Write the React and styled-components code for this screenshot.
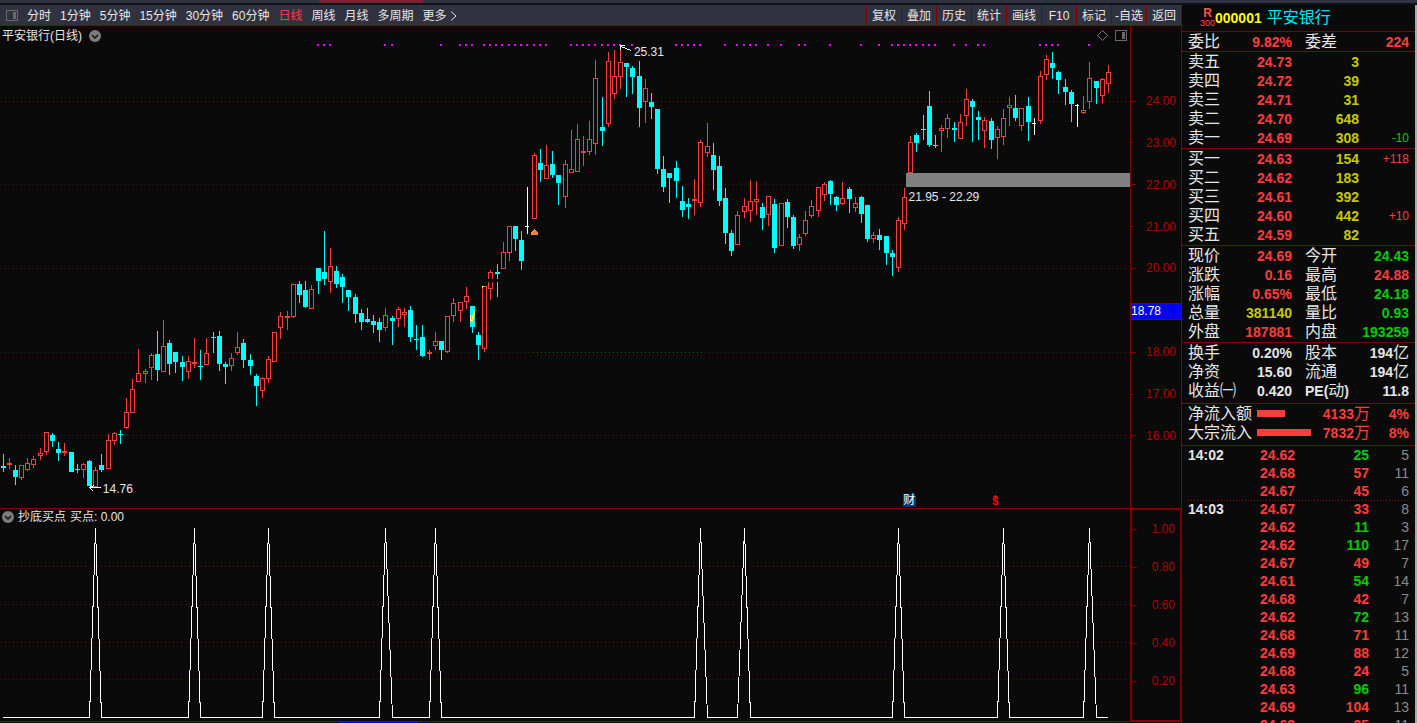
import React from "react";
import styled, { createGlobalStyle } from "styled-components";

const UP = "#ff3c3c";
const DOWN = "#00ffff";
const RULE = "#800000";
const BG = "#0a0a0a";
const GREEN = "#00cc00";
const YELLOW = "#c8c800";
const WHITE = "#e6e6e6";
const MUTED = "#8a8a8a";

const Global = createGlobalStyle`
  * { box-sizing: border-box; }
  body {
    margin: 0;
    background: ${BG};
    color: ${WHITE};
    font: 12px/16px "Liberation Sans", "Noto Sans CJK SC", sans-serif;
    overflow: hidden;
  }
`;

const Page = styled.div`
  display: flex;
  flex-direction: column;
  height: 100vh;
`;

const TitleStrip = styled.div`
  flex: none;
  display: flex;
  height: 5px;
  background: #303240;
  border-bottom: 2px solid #10141a;
`;
const StripGap = styled.div`
  flex: 319 1 0;
`;
const StripActive = styled.div`
  flex: 104 1 0;
  background: #7d2031;
`;
const StripRest = styled.div`
  flex: 994 1 0;
`;

const Body = styled.div`
  flex: 1;
  min-height: 0;
  display: flex;
`;

const Workspace = styled.main`
  flex: 1;
  min-width: 0;
  display: flex;
  flex-direction: column;
`;

const Toolbar = styled.nav`
  flex: none;
  display: flex;
  justify-content: space-between;
  height: 21px;
  background: #303240;
  border-bottom: 1px solid ${RULE};
`;

const Periods = styled.div`
  display: flex;
  align-items: center;
  gap: 9px;
  padding: 2px 0 0 6px;
  white-space: nowrap;
`;

const PlainButton = styled.button`
  display: flex;
  align-items: center;
  padding: 0;
  border: 0;
  background: none;
  color: ${(p) => (p.$active ? UP : WHITE)};
  font: inherit;
  white-space: nowrap;
  cursor: pointer;
`;

const Tools = styled.div`
  display: flex;
`;

const ToolButton = styled(PlainButton)`
  width: 35px;
  padding-top: 2px;
  justify-content: center;
  border-left: 1px solid ${RULE};
`;

const Charts = styled.div`
  flex: 1;
  min-height: 0;
  display: grid;
  grid-template-columns: minmax(0, 1fr) 51px;
  grid-template-rows: minmax(0, 483fr) minmax(0, 213fr);
`;

const Pane = styled.section`
  position: relative;
  min-width: 0;
  min-height: 0;
  border-bottom: 1px solid ${RULE};
`;

const Plot = styled.svg`
  display: block;
  width: 100%;
  height: 100%;
  shape-rendering: crispEdges;
`;

const PaneTitle = styled.h2`
  position: absolute;
  top: ${(p) => p.$top};
  left: 2px;
  display: flex;
  align-items: center;
  gap: 4px;
  margin: 0;
  font-size: 12px;
  font-weight: 400;
  line-height: 16px;
`;

const PaneTools = styled.div`
  position: absolute;
  top: 3px;
  right: 3px;
  display: flex;
  align-items: center;
  gap: 6px;
`;

const Note = styled.span`
  position: absolute;
  left: ${(p) => p.$x};
  top: ${(p) => p.$y};
  line-height: 14px;
  white-space: nowrap;
`;

const Badge = styled(Note)`
  width: 13px;
  height: 13px;
  line-height: 13px;
  text-align: center;
  color: #fff;
  background: #06386e;
  border-top-right-radius: 3px;
`;

const Dividend = styled(Note)`
  display: flex;
  flex-direction: column;
  align-items: center;
  color: #ff0000;
  font-size: 11px;
  font-weight: 700;
  line-height: 9px;
`;

const Axis = styled.div`
  position: relative;
  display: flex;
  flex-direction: column;
  min-height: 0;
  border: solid ${RULE};
  border-width: ${(p) => (p.$framed ? "2px" : "0 0 0 1px")};
  margin: ${(p) => (p.$framed ? "-1px -1px 0 0" : "0")};
  color: #b40000;
`;
const Ladder = styled.div`
  flex: ${(p) => p.$share} 1 0;
  min-height: 0;
  display: flex;
  flex-direction: column;
`;
const Space = styled.div`
  flex: ${(p) => p.$share} 1 0;
`;
const Step = styled.div`
  flex: 1 1 0;
  min-height: 0;
  display: flex;
  align-items: center;
  justify-content: space-between;
  padding-right: 5px;
`;
const Tick = styled.i`
  width: ${(p) => (p.$minor ? 2 : 5)}px;
  height: 1px;
  background: ${RULE};
`;
const PriceTag = styled.div`
  position: absolute;
  top: 57.4%;
  left: 0;
  right: 0;
  height: 17px;
  background: #0000ff;
  border: solid ${RULE};
  border-width: 1px 0;
  color: #fff;
  line-height: 15px;
`;

const DateStrip = styled.div`
  flex: none;
  display: flex;
  height: 1px;
`;
const DateMark = styled.div`
  flex: ${(p) => p.$share} 1 0;
  background: ${(p) => (p.$on ? "#0000ff" : BG)};
`;

const Quote = styled.aside`
  flex: none;
  width: 236px;
  overflow: hidden;
  border-left: 1px solid ${RULE};
  border-right: 2px solid #a8a8a8;
  font-size: 14px;
  font-weight: 700;
`;

const QuoteHeader = styled.header`
  display: flex;
  align-items: center;
  height: 27px;
  padding-left: 18px;
  border-bottom: 1px solid ${RULE};
`;
const Markers = styled.span`
  display: flex;
  flex-direction: column;
  align-items: center;
  width: 15px;
  color: #ff5050;
  font-size: 12px;
  line-height: 10px;
`;
const MarkerSmall = styled.span`
  font-size: 9px;
  font-weight: 400;
`;
const Code = styled.span`
  color: #ffff00;
`;
const Name = styled.span`
  margin-left: 5px;
  color: #00e5ff;
  font-size: 16px;
  font-weight: 400;
`;

const Block = styled.div`
  padding: 0 6px ${(p) => p.$pad || 0}px;
  border-bottom: ${(p) => (p.$last ? 0 : 1)}px solid ${RULE};
`;
const Grid = styled.table`
  width: 100%;
  table-layout: fixed;
  border-collapse: collapse;
  border-spacing: 0;
`;
const Row = styled.tr`
  height: ${(p) => p.$h || 19}px;
`;
const Label = styled.th`
  width: ${(p) => p.$w}px;
  padding: 0 0 0 ${(p) => p.$indent || 0}px;
  text-align: left;
  font-size: 16px;
  font-weight: 400;
  line-height: 18px;
  white-space: nowrap;
`;
const Latin = styled.b`
  font-size: 14px;
`;
const Value = styled.td`
  width: ${(p) => (p.$w ? p.$w + "px" : "auto")};
  padding: 0;
  text-align: right;
  color: ${(p) => p.$color || WHITE};
  font-weight: ${(p) => (p.$thin ? 400 : 700)};
  font-size: ${(p) => p.$size || 14}px;
  line-height: 18px;
  white-space: nowrap;
`;
const Unit = styled.span`
  font-size: 16px;
  font-weight: 400;
`;
const FlowCell = styled.td`
  width: 54px;
  padding: 0;
`;
const FlowBar = styled.div`
  height: 7px;
  background: ${UP};
`;
const Time = styled.th`
  width: 60px;
  padding: 0;
  text-align: left;
  font-size: 14px;
  line-height: 18px;
`;
const Minute = styled.tbody`
  background: ${(p) =>
    p.$ruled
      ? `repeating-linear-gradient(90deg, ${RULE} 0 1px, transparent 1px 3px) top / 100% 1px no-repeat`
      : "none"};
`;

/* x, high, low, body top, body bottom, kind (r rising, c falling, w flat) */
const candles = `
3 454 472 466 468 c|9 458 469 463 465 r|15 465 485 470 477 c|21 465 480 465 478 r|27 458 471 463 470 r|33 456 468 459 465 r|40 448 460 453 456 r|46 432 455 432 452 r|52 433 447 435 441 c|58 442 461 449 453 c|64 443 456 451 453 r|71 452 472 452 472 c|77 464 473 469 470 c|83 463 478 464 470 r|89 460 486 461 486 c|95 467 487 470 487 r|101 454 472 465 470 c|108 434 469 440 469 r|114 432 445 433 441 r|120 430 444 434 435 c|126 398 429 412 428 r|132 379 413 389 413 r|138 349 382 373 382 r|145 369 383 371 374 r|151 353 380 355 368 r|157 331 381 354 370 c|163 320 372 346 372 r|169 340 375 343 364 c|175 352 373 352 362 c|182 356 381 362 367 c|188 356 379 361 372 r|194 338 368 362 364 r|200 350 380 366 367 c|206 338 365 353 365 r|213 332 353 337 338 c|219 331 371 336 364 c|225 362 384 364 367 c|231 353 371 358 366 r|237 332 355 347 353 r|243 339 368 343 360 c|250 354 375 360 366 c|256 374 406 376 386 c|262 377 398 378 391 r|268 356 383 359 379 r|274 332 362 332 362 r|280 312 339 316 328 r|287 311 330 316 318 r|293 284 318 284 317 r|299 281 303 284 295 c|305 281 308 290 307 c|311 285 309 289 309 r|318 268 294 268 281 c|324 231 285 272 279 c|330 248 293 266 282 r|336 266 288 271 284 c|342 274 303 277 287 c|348 290 311 290 297 c|355 294 323 297 314 c|361 309 330 313 322 c|367 308 323 319 322 c|373 315 333 321 325 c|379 318 342 322 330 c|385 308 331 315 328 r|392 316 345 318 321 c|398 307 327 309 319 r|404 308 327 312 315 r|410 306 342 310 337 c|416 325 350 339 340 c|422 325 357 337 356 c|429 350 360 352 354 r|435 332 350 341 346 r|441 341 360 341 350 c|447 316 353 316 352 r|453 298 322 303 316 r|460 302 322 302 311 r|466 287 309 296 302 r|472 306 333 306 327 c|478 332 360 335 345 c|484 286 352 286 349 r|490 270 300 272 289 r|497 264 297 272 274 c|503 242 269 252 269 r|509 226 261 226 253 r|515 226 251 226 239 c|521 231 270 240 261 c|527 187 234 226 227 w|534 153 219 155 219 r|540 149 182 163 170 c|546 145 179 165 179 r|552 151 178 164 175 c|558 175 205 175 183 c|565 160 208 164 197 r|571 130 173 169 173 r|577 124 172 139 172 r|583 136 166 151 153 r|589 121 155 139 152 r|595 60 155 78 144 r|602 97 146 127 131 c|608 52 127 61 124 r|614 50 99 76 94 r|620 46 89 62 77 r|626 63 97 63 67 c|632 66 94 68 77 c|639 61 127 76 108 c|645 79 123 88 102 r|651 93 119 102 107 c|657 109 174 109 169 c|663 156 192 169 187 c|669 173 203 173 178 c|676 161 198 168 181 c|682 186 217 201 210 c|688 198 219 204 207 c|694 179 215 199 201 r|700 140 207 142 203 r|707 123 157 146 153 r|713 143 190 155 170 c|719 156 206 166 201 c|725 188 244 198 233 c|731 230 256 233 251 c|737 211 245 215 245 r|744 198 218 206 212 r|750 180 222 201 211 r|756 181 215 199 202 r|762 203 230 207 218 c|768 196 226 196 215 r|774 199 253 204 248 c|781 203 246 203 246 r|787 199 228 202 217 c|793 215 249 217 246 c|799 234 251 237 245 r|805 211 236 220 234 r|811 200 218 206 216 r|818 187 217 187 211 r|824 182 201 184 195 r|830 180 205 181 194 c|836 196 211 197 205 c|842 182 205 198 204 r|849 187 213 189 199 c|855 197 212 203 208 r|861 196 223 197 214 c|867 205 242 205 239 c|873 232 243 235 239 r|879 229 250 235 240 c|886 236 265 236 253 c|892 250 276 253 257 c|898 217 272 220 268 r|904 188 230 197 224 r|910 136 173 142 173 r|916 133 152 135 143 c|923 115 140 129 130 c|929 91 147 106 145 c|935 135 148 145 146 c|941 125 152 128 131 r|947 114 138 118 129 r|954 122 142 128 130 c|960 114 139 122 139 r|966 89 126 99 116 r|972 99 142 101 107 c|978 111 140 117 120 c|984 117 148 120 131 r|991 118 149 121 140 c|997 126 159 129 138 r|1003 109 145 118 137 r|1009 97 126 105 108 r|1015 95 121 108 118 c|1021 108 131 108 126 r|1028 97 141 106 122 c|1034 118 135 123 124 w|1040 71 124 76 121 r|1046 55 80 59 75 r|1052 52 79 63 68 c|1058 71 94 72 80 c|1065 79 105 87 92 c|1071 90 122 92 104 c|1077 104 127 105 106 w|1083 96 114 110 113 r|1089 62 109 78 102 r|1096 81 104 81 88 c|1102 78 103 79 96 r|1108 65 93 72 84 r`
  .trim()
  .split("|")
  .map((s) => {
    const [x, hi, lo, top, bottom, kind] = s.split(" ");
    return { x: +x, hi: +hi, lo: +lo, top: +top, bottom: +bottom, kind };
  });

const signals = [
  318, 324, 330, 385, 392, 441, 460, 466, 472, 484, 490, 496, 502, 509, 515, 521, 527, 534, 540, 546,
  571, 577, 583, 589, 595, 602, 608, 614, 620, 632, 676, 682, 688, 694, 700, 725, 737, 744, 750, 756,
  768, 781, 799, 805, 830, 861, 879, 892, 898, 904, 910, 916, 923, 929, 935, 954, 966, 978, 984,
  1040, 1046, 1052, 1058, 1089,
];

const spikes = [
  [89, 95, 101], [188, 194, 200], [262, 268, 274], [379, 385, 392], [429, 435, 441],
  [694, 700, 707], [737, 744, 750], [892, 898, 904], [997, 1003, 1009], [1083, 1089, 1096],
];

function Candle({ x, hi, lo, top, bottom, kind }) {
  const color = kind === "r" ? UP : kind === "c" ? DOWN : "#ffffff";
  const h = bottom - top;
  const hollow = kind === "r" && h > 2;
  return (
    <g fill={color}>
      <rect x={x} y={hi} width="1" height={Math.max(0, top - hi)} />
      <rect x={x} y={bottom} width="1" height={Math.max(0, lo - bottom)} />
      <rect x={x - 2} y={top} width={kind === "w" ? 4 : 5} height={h} />
      {hollow && <rect x={x - 1} y={top + 1} width="3" height={h - 2} fill={BG} />}
    </g>
  );
}

function GridLine({ y, from = 1, to = 1130, color = "#6e0000" }) {
  return <line x1={from} x2={to} y1={y + 0.5} y2={y + 0.5} stroke={color} strokeDasharray="1 3" />;
}

function PriceChart() {
  return (
    <Plot viewBox="0 26 1130 482" preserveAspectRatio="none" aria-label="日线">
      {[101, 184, 268, 352, 435].map((y) => (
        <GridLine key={y} y={y} />
      ))}
      <GridLine y={352} from={533} to={703} color="#a00000" />
      {candles.map((c) => (
        <Candle key={c.x} {...c} />
      ))}
      <rect x="488" y="279" width="12" height="3" fill={BG} />
      <rect x="906" y="173" width="224" height="14" fill="#808080" />
      {signals.map((x) => (
        <rect key={x} x={x - 1} y="44" width="2" height="2" fill="#ff00ff" />
      ))}
      <path d="M534 229h1v1h1v1h1v1h1v3h-7v-3h1v-1h1v-1h1z" fill="#ff7f3f" />
      <path d="M482 286h2v1h-1v1h-1z" fill="#ffff00" />
      <path d="M474 311h1v5h-1v3h-1v3h-2v-3h1v-4h1v-4z" fill="#ffff00" />
      <path d="M470 315h1v6h-1z" fill="#fff" />
      <path d="M631.5 50.5L620.5 46.5M620.5 50V45.5H625" fill="none" stroke="#fff" />
      <path d="M101 487.5H89.5M94 485.5L89.5 487.5L93 491" fill="none" stroke="#fff" />
    </Plot>
  );
}

function SignalChart() {
  const points = spikes.map(([a, b, c]) => `L${a}.5 717.5L${b}.5 528L${c}.5 717.5`).join("");
  return (
    <Plot viewBox="0 509 1130 212" preserveAspectRatio="none" aria-label="抄底买点">
      {[566, 604, 642, 679].map((y) => (
        <GridLine key={y} y={y} />
      ))}
      <path d={`M3 717.5${points}L1108 717.5`} fill="none" stroke="#fff" />
    </Plot>
  );
}

function Toggle() {
  return (
    <PlainButton aria-label="展开">
      <svg width="12" height="12" viewBox="0 0 12 12">
        <circle cx="6" cy="6" r="6" fill="#7c7c7c" />
        <path d="M3 5l3 3 3-3" fill="none" stroke="#111" strokeWidth="1.5" />
      </svg>
    </PlainButton>
  );
}

function PanelIcon() {
  return (
    <svg width="12" height="12" viewBox="0 0 12 12" shapeRendering="crispEdges">
      <rect x="0.5" y="0.5" width="11" height="10" rx="1" fill="none" stroke="#6a6a6a" />
      <rect x="7" y="2" width="3" height="7" fill="#6a6a6a" />
    </svg>
  );
}

const periods = ["分时", "1分钟", "5分钟", "15分钟", "30分钟", "60分钟", "日线", "周线", "月线", "多周期"];
const tools = ["复权", "叠加", "历史", "统计", "画线", "F10", "标记", "-自选", "返回"];

const sells = [
  ["卖五", "24.73", "3"],
  ["卖四", "24.72", "39"],
  ["卖三", "24.71", "31"],
  ["卖二", "24.70", "648"],
  ["卖一", "24.69", "308", "-10"],
];
const buys = [
  ["买一", "24.63", "154", "+118"],
  ["买二", "24.62", "183"],
  ["买三", "24.61", "392"],
  ["买四", "24.60", "442", "+10"],
  ["买五", "24.59", "82"],
];
const ratio = [["委比", "9.82%", UP, "委差", "224", UP]];
const prices = [
  ["现价", "24.69", UP, "今开", "24.43", GREEN],
  ["涨跌", "0.16", UP, "最高", "24.88", UP],
  ["涨幅", "0.65%", UP, "最低", "24.18", GREEN],
  ["总量", "381140", YELLOW, "量比", "0.93", GREEN],
  ["外盘", "187881", UP, "内盘", "193259", GREEN],
];
const basics = [
  ["换手", "0.20%", WHITE, "股本", <>194<Unit>亿</Unit></>, WHITE],
  ["净资", "15.60", WHITE, "流通", <>194<Unit>亿</Unit></>, WHITE],
  ["收益㈠", "0.420", WHITE, <><Latin>PE(</Latin>动<Latin>)</Latin></>, "11.8", WHITE],
];
const flows = [
  ["净流入额", 28, "4133", "4%"],
  ["大宗流入", 54, "7832", "8%"],
];
const minutes = [
  ["14:02", [["24.62", "25", GREEN, 5], ["24.68", "57", UP, 11], ["24.67", "45", UP, 6]]],
  [
    "14:03",
    [
      ["24.67", "33", UP, 8],
      ["24.62", "11", GREEN, 3],
      ["24.62", "110", GREEN, 17],
      ["24.67", "49", UP, 7],
      ["24.61", "54", GREEN, 14],
      ["24.68", "42", UP, 7],
      ["24.62", "72", GREEN, 13],
      ["24.68", "71", UP, 11],
      ["24.69", "88", UP, 12],
      ["24.68", "24", UP, 5],
      ["24.63", "96", GREEN, 11],
      ["24.69", "104", UP, 13],
      ["24.68", "35", UP, 11],
    ],
  ],
];

function Orders({ rows }) {
  return (
    <Grid>
      <tbody>
        {rows.map(([label, price, volume, change]) => (
          <Row key={label}>
            <Label scope="row" $w={48}>{label}</Label>
            <Value $w={56} $color={UP}>{price}</Value>
            <Value $w={67} $color={YELLOW}>{volume}</Value>
            <Value $thin $size={12} $color={change && change[0] === "-" ? GREEN : UP}>{change}</Value>
          </Row>
        ))}
      </tbody>
    </Grid>
  );
}

function Stats({ rows }) {
  return (
    <Grid>
      <tbody>
        {rows.map(([a, av, ac, b, bv, bc]) => (
          <Row key={a}>
            <Label scope="row" $w={48}>{a}</Label>
            <Value $w={56} $color={ac}>{av}</Value>
            <Label scope="row" $w={60} $indent={13}>{b}</Label>
            <Value $color={bc}>{bv}</Value>
          </Row>
        ))}
      </tbody>
    </Grid>
  );
}

function QuotePanel() {
  return (
    <Quote>
      <QuoteHeader>
        <Markers>
          R<MarkerSmall>300</MarkerSmall>
        </Markers>
        <Code>000001</Code>
        <Name>平安银行</Name>
      </QuoteHeader>
      <Block><Stats rows={ratio} /></Block>
      <Block $pad={1}><Orders rows={sells} /></Block>
      <Block $pad={1}><Orders rows={buys} /></Block>
      <Block $pad={1}><Stats rows={prices} /></Block>
      <Block $pad={3}><Stats rows={basics} /></Block>
      <Block $pad={3}>
        <Grid>
          <tbody>
            {flows.map(([label, size, amount, share]) => (
              <Row key={label}>
                <Label scope="row" $w={69}>{label}</Label>
                <FlowCell><FlowBar style={{ width: size }} /></FlowCell>
                <Value $w={59} $color={UP}>{amount}<Unit>万</Unit></Value>
                <Value $color={UP}>{share}</Value>
              </Row>
            ))}
          </tbody>
        </Grid>
      </Block>
      <Block $last>
        <Grid>
          {minutes.map(([time, rows], m) => (
            <Minute key={time} $ruled={m > 0}>
              {rows.map(([price, volume, color, count], i) => (
                <Row key={i} $h={18}>
                  <Time scope="row">{i === 0 ? time : ""}</Time>
                  <Value $w={47} $color={UP}>{price}</Value>
                  <Value $w={74} $color={color}>{volume}</Value>
                  <Value $thin $color={MUTED}>{count}</Value>
                </Row>
              ))}
            </Minute>
          ))}
        </Grid>
      </Block>
    </Quote>
  );
}

export default function App() {
  return (
    <Page>
      <Global />
      <TitleStrip>
        <StripGap />
        <StripActive />
        <StripRest />
      </TitleStrip>
      <Body>
        <Workspace>
          <Toolbar>
            <Periods>
              <PlainButton aria-label="侧栏"><PanelIcon /></PlainButton>
              {periods.map((p) => (
                <PlainButton key={p} $active={p === "日线"}>{p}</PlainButton>
              ))}
              <PlainButton>
                更多
                <svg width="12" height="12" viewBox="0 0 12 12">
                  <path d="M4 1.5l5 4.5-5 4.5" fill="none" stroke={WHITE} />
                </svg>
              </PlainButton>
            </Periods>
            <Tools>
              {tools.map((t) => (
                <ToolButton key={t}>{t}</ToolButton>
              ))}
            </Tools>
          </Toolbar>
          <Charts>
            <Pane>
              <PriceChart />
              <PaneTitle $top="2px">
                平安银行(日线)&nbsp; <Toggle />
              </PaneTitle>
              <PaneTools>
                <svg width="13" height="13" viewBox="0 0 13 13">
                  <path d="M6.5 1.5l5 5-5 5-5-5z" fill="none" stroke="#777" />
                </svg>
                <PanelIcon />
              </PaneTools>
              <Note $x="56.1%" $y="3.9%">25.31</Note>
              <Note $x="9.1%" $y="94.6%">14.76</Note>
              <Note $x="80.4%" $y="34%">21.95 - 22.29</Note>
              <Badge $x="79.9%" $y="97%">财</Badge>
              <Dividend $x="87.8%" $y="97.4%">
                <svg width="5" height="2" viewBox="0 0 5 2" shapeRendering="crispEdges">
                  <path d="M2 0h1v1h2v1h-5v-1h2z" fill="#ff0000" />
                </svg>
                $
              </Dividend>
            </Pane>
            <Axis>
              <Space $share={54} />
              <Ladder $share={376}>
                {[24, 23, 22, 21, 20, 19, 18, 17, 16].map((v) => (
                  <Step key={v}>
                    <Tick $minor={v % 2 === 1} />
                    {v !== 19 && v.toFixed(2)}
                  </Step>
                ))}
              </Ladder>
              <Space $share={52} />
              <PriceTag>18.78</PriceTag>
            </Axis>
            <Pane>
              <SignalChart />
              <PaneTitle $top="0">
                <Toggle />
                <span>抄底买点</span>
                <span>买点: 0.00</span>
              </PaneTitle>
            </Pane>
            <Axis $framed>
              <Ladder $share={190}>
                {["1.00", "0.80", "0.60", "0.40", "0.20"].map((v) => (
                  <Step key={v}>
                    <Tick />
                    {v}
                  </Step>
                ))}
              </Ladder>
              <Space $share={20} />
            </Axis>
          </Charts>
          <DateStrip>
            <DateMark $share={341} />
            <DateMark $share={77} $on />
            <DateMark $share={763} />
          </DateStrip>
        </Workspace>
        <QuotePanel />
      </Body>
    </Page>
  );
}
